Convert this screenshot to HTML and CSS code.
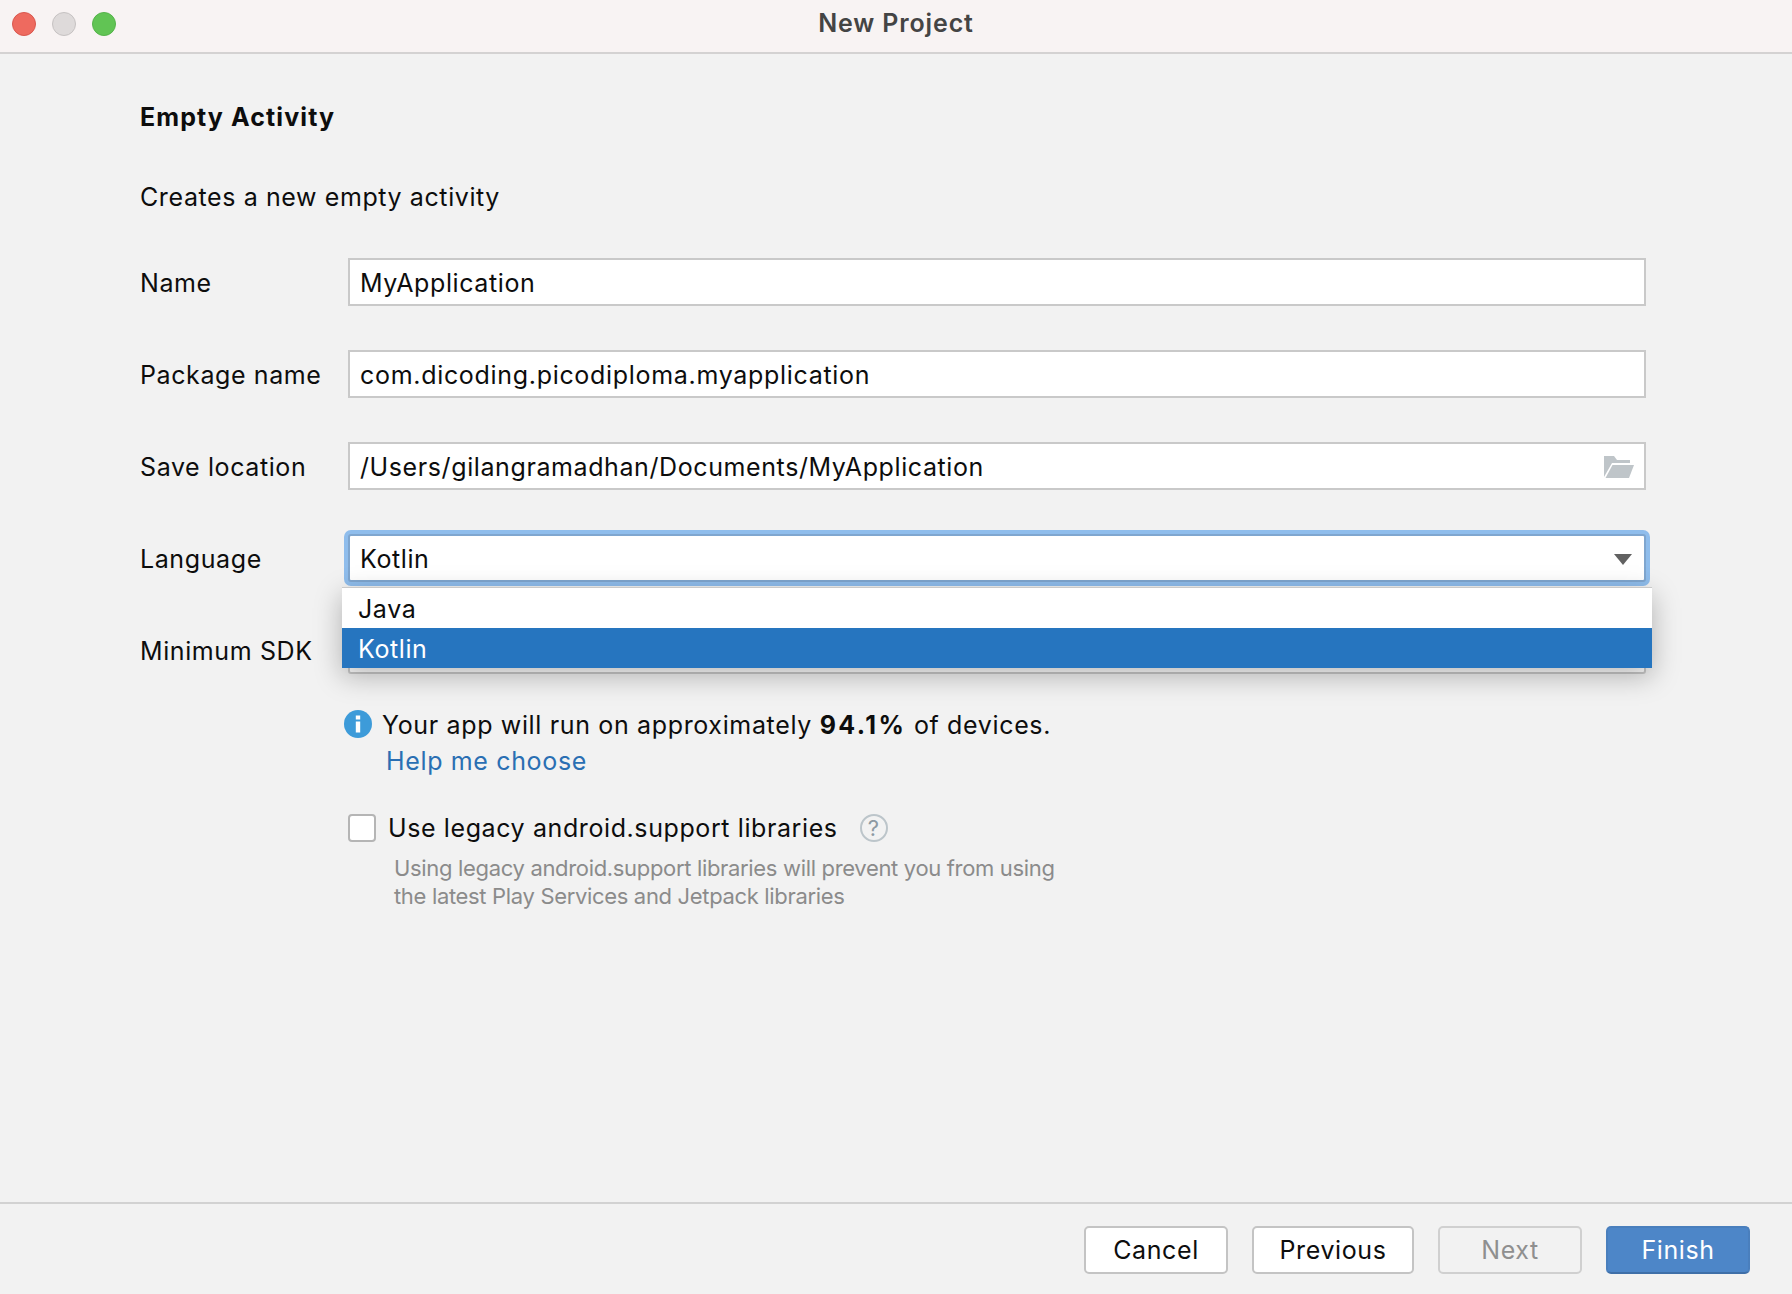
FILE: index.html
```html
<!DOCTYPE html>
<html lang="en">
<head>
    <meta charset="UTF-8">
    <title>New Project</title>
    <link rel="stylesheet" href="styles.css">
</head>
<body>
    <div class="window">
        <header class="titlebar">
            <div class="lights">
                <span class="light light-red"></span>
                <span class="light light-grey"></span>
                <span class="light light-green"></span>
            </div>
            <div class="title">New Project</div>
        </header>

        <main class="content">
            <h1>Empty Activity</h1>
            <p class="desc">Creates a new empty activity</p>

            <div class="row">
                <label>Name</label>
                <div class="field">MyApplication</div>
            </div>
            <div class="row">
                <label>Package name</label>
                <div class="field field-long">com.dicoding.picodiploma.myapplication</div>
            </div>
            <div class="row">
                <label>Save location</label>
                <div class="field field-icon">
                    /Users/gilangramadhan/Documents/MyApplication
                    <svg class="folder" width="30" height="22" viewBox="0 0 30 22">
                        <path d="M0 0H10L13 4H26V7H8L0 21Z" fill="#bfc5c9"/>
                        <path d="M8.500 9H30L25 22H1.500Z" fill="#bfc5c9"/>
                    </svg>
                </div>
            </div>
            <div class="row">
                <label>Language</label>
                <div class="field field-focus">
                    Kotlin
                    <span class="arrow"></span>
                    <div class="popup">
                        <div class="option">Java</div>
                        <div class="option option-on">Kotlin</div>
                    </div>
                </div>
            </div>
            <div class="row">
                <label>Minimum SDK</label>
                <div class="field field-sdk"></div>
            </div>

            <div class="info">
                <svg class="info-icon" width="28" height="28" viewBox="0 0 28 28">
                    <circle cx="14" cy="14" r="14" fill="#3d9bd9"/>
                    <rect x="11.800" y="5.500" width="4.400" height="4" fill="#fff"/>
                    <rect x="11.800" y="11.500" width="4.400" height="11" fill="#fff"/>
                </svg>
                <div>
                    <div>Your app will run on approximately <b>94.1%</b> of devices.</div>
                    <a class="help" href="#">Help me choose</a>
                </div>
            </div>

            <div class="legacy">
                <span class="checkbox"></span>
                <span>Use legacy android.support libraries</span>
                <span class="question">?</span>
            </div>
            <p class="note">Using legacy android.support libraries will prevent you from using<br>the latest Play Services and Jetpack libraries</p>
        </main>

        <footer class="footer">
            <button class="btn">Cancel</button>
            <button class="btn btn-prev">Previous</button>
            <button class="btn btn-off">Next</button>
            <button class="btn btn-main">Finish</button>
        </footer>
    </div>
</body>
</html>
```

FILE: styles.css
```css
html, body {
    margin: 0;
    padding: 0;
}
body {
    font-family: Inter, "Liberation Sans", sans-serif;
    font-size: 25px;
    letter-spacing: 0.6px;
    color: #0d0d0d;
    background-color: #f2f2f2;
}
.window {
    height: 1294px;
    display: flex;
    flex-direction: column;
    overflow: hidden;
}
.titlebar {
    height: 54px;
    box-sizing: border-box;
    padding-bottom: 6px;
    flex: none;
    display: flex;
    align-items: center;
    justify-content: center;
    position: relative;
    background-color: #f8f3f3;
    border-bottom: 2px solid #d4d2d2;
}
.lights {
    position: absolute;
    left: 12px;
    top: 12px;
    display: flex;
    gap: 16px;
}
.light {
    width: 24px;
    height: 24px;
    border-radius: 50%;
    box-sizing: border-box;
}
.light-red {
    background-color: #ee6a5f;
    border: 1px solid #d9574e;
}
.light-grey {
    background-color: #dedada;
    border: 1px solid #c6c2c2;
}
.light-green {
    background-color: #61c454;
    border: 1px solid #55b34a;
}
.title {
    font-size: 25px;
    font-weight: 600;
    letter-spacing: 0.85px;
    color: #444;
}
.content {
    flex: 1;
    padding: 0 146px 0 140px;
}
h1 {
    margin: 47px 0 0;
    font-size: 25px;
    line-height: 32px;
    font-weight: 700;
    letter-spacing: 1.1px;
}
.desc {
    margin: 48px 0 0;
    line-height: 32px;
}
.row {
    display: flex;
    align-items: center;
    height: 48px;
    margin-top: 44px;
}
.desc + .row {
    margin-top: 45px;
}
.row label {
    width: 208px;
    flex: none;
    padding-top: 2px;
}
.field {
    flex: 1;
    height: 48px;
    box-sizing: border-box;
    padding: 2px 10px 0;
    display: flex;
    align-items: center;
    justify-content: space-between;
    position: relative;
    background-color: #fff;
    border: 2px solid #c9c9c9;
}
.field-long {
    letter-spacing: 0.69px;
}
.field-focus {
    border: 2px solid #7fa6cf;
    border-radius: 3px;
    box-shadow: 0 0 0 4px #8fbdec;
}
.field-sdk {
    border-radius: 3px;
}
.arrow {
    width: 0;
    height: 0;
    margin-right: 2px;
    border-left: 9px solid transparent;
    border-right: 9px solid transparent;
    border-top: 11px solid #616161;
}
.popup {
    position: absolute;
    left: -8px;
    right: -8px;
    top: 51px;
    z-index: 2;
    background-color: #fff;
    border-top: 1px solid #c9c9c9;
    box-shadow: 0 8px 26px rgba(0, 0, 0, 0.28);
}
.option {
    height: 40px;
    box-sizing: border-box;
    padding: 2px 16px 0;
    display: flex;
    align-items: center;
}
.option-on {
    background-color: #2675bf;
    color: #fff;
}
.info {
    display: flex;
    gap: 10px;
    margin: 33px 0 0 204px;
    line-height: 36px;
    letter-spacing: 0.65px;
}
.info b {
    letter-spacing: 2.4px;
}
.info-icon {
    margin-top: 3px;
    flex: none;
}
.help {
    margin-left: 4px;
    color: #2a6fb3;
    text-decoration: none;
}
.legacy {
    display: flex;
    align-items: center;
    margin: 32px 0 0 208px;
    height: 34px;
}
.checkbox {
    width: 28px;
    height: 28px;
    box-sizing: border-box;
    margin-right: 12px;
    background-color: #fff;
    border: 2px solid #b5b5b5;
    border-radius: 4px;
}
.question {
    width: 28px;
    height: 28px;
    box-sizing: border-box;
    margin-left: 22px;
    display: flex;
    align-items: center;
    justify-content: center;
    font-size: 22px;
    color: #8d9aa3;
    border: 2px solid #bcc5ca;
    border-radius: 50%;
}
.note {
    margin: 9px 0 0 254px;
    font-size: 22px;
    letter-spacing: -0.33px;
    line-height: 28px;
    color: #8b8b8b;
}
.footer {
    flex: none;
    height: 88px;
    display: flex;
    align-items: center;
    justify-content: flex-end;
    padding: 2px 42px 0 0;
    border-top: 2px solid #d2d2d2;
    gap: 24px;
}
.btn {
    width: 144px;
    height: 48px;
    font-family: inherit;
    font-size: 25px;
    letter-spacing: inherit;
    color: #0d0d0d;
    background-color: #fff;
    border: 2px solid #c4c4c4;
    border-radius: 5px;
    padding: 0;
}
.btn-prev {
    width: 162px;
}
.btn-off {
    color: #8f8f8f;
    background-color: #f2f2f2;
    border-color: #d0d0d0;
}
.btn-main {
    color: #fff;
    background-color: #4d86c8;
    border-color: #4a7fbd;
    border-bottom-color: #3f6fa8;
}
```
